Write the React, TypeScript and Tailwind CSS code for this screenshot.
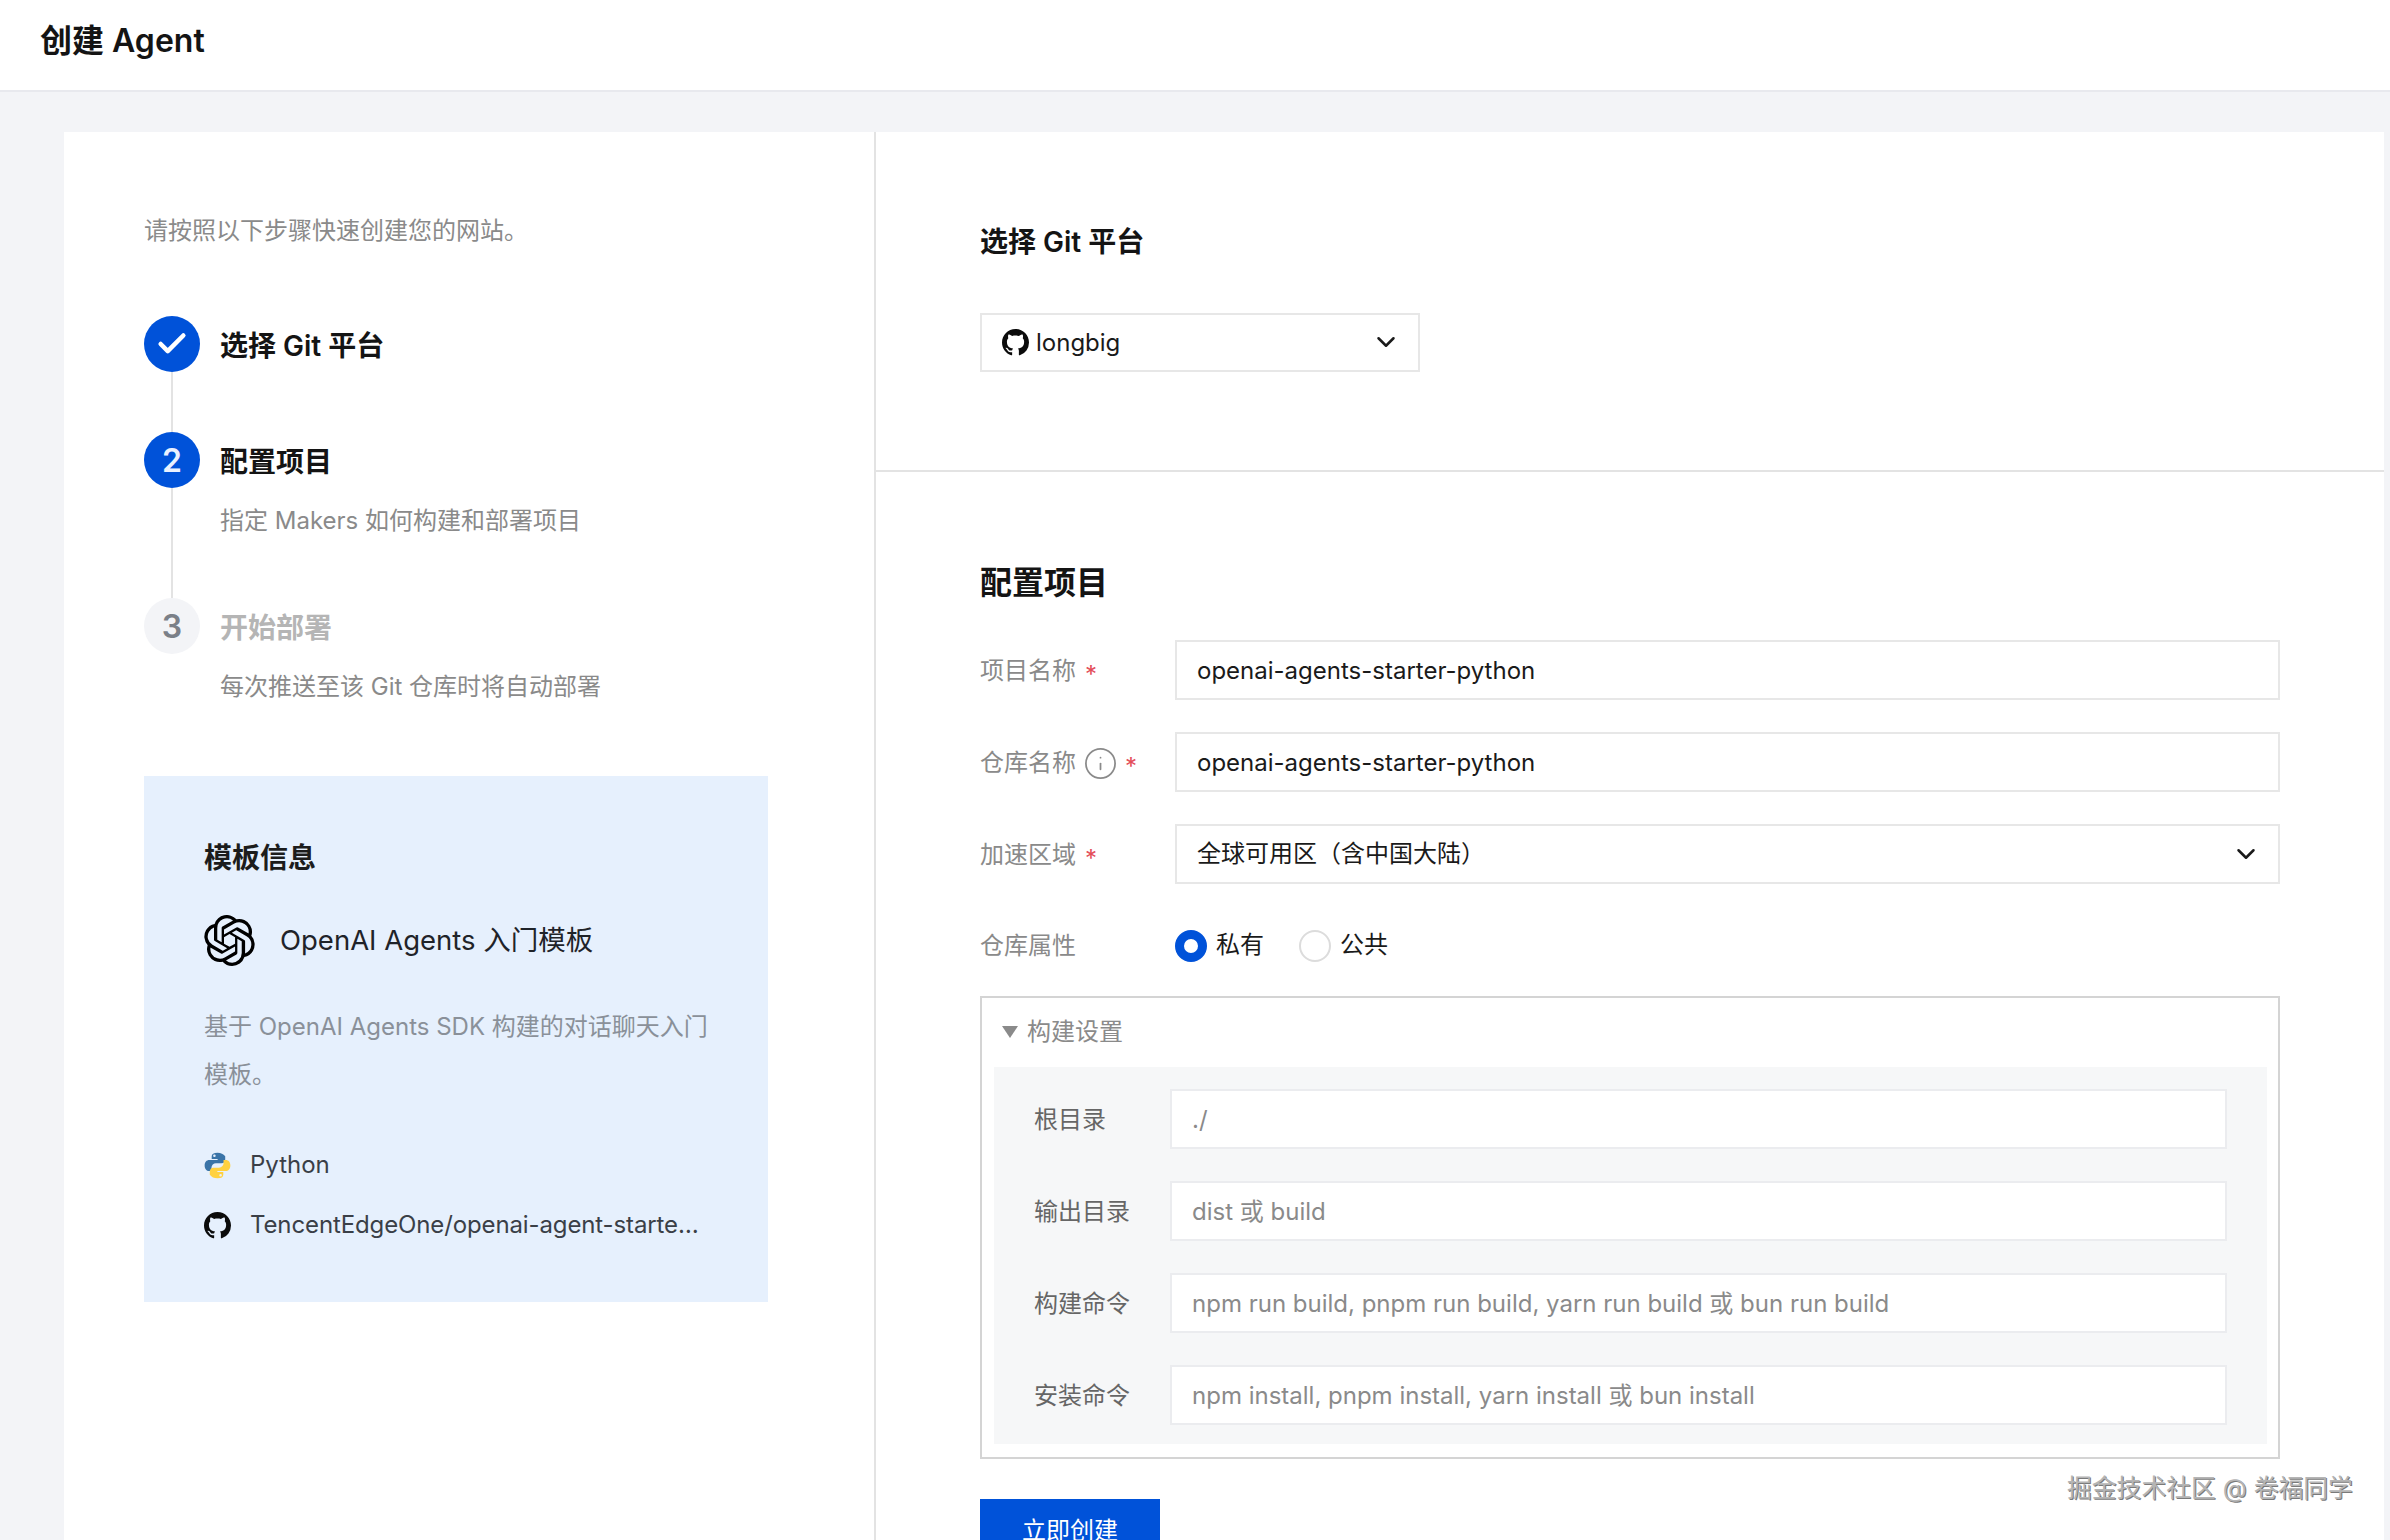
import { ChevronDown, Check, Info } from "lucide-react";
import { SiOpenai } from "react-icons/si";

const GH = ({ className }: { className: string }) => (
  <svg viewBox="0 0 16 16" className={className} fill="#0b0b0b">
    <path d="M8 0C3.58 0 0 3.58 0 8c0 3.54 2.29 6.53 5.47 7.59.4.07.55-.17.55-.38 0-.19-.01-.82-.01-1.49-2.01.37-2.53-.49-2.69-.94-.09-.23-.48-.94-.82-1.13-.28-.15-.68-.52-.01-.53.63-.01 1.08.58 1.23.82.72 1.21 1.87.87 2.33.66.07-.52.28-.87.51-1.07-1.78-.2-3.64-.89-3.64-3.95 0-.87.31-1.59.82-2.15-.08-.2-.36-1.02.08-2.12 0 0 .67-.21 2.2.82.64-.18 1.32-.27 2-.27.68 0 1.36.09 2 .27 1.53-1.04 2.2-.82 2.2-.82.44 1.1.16 1.92.08 2.12.51.56.82 1.27.82 2.15 0 3.07-1.87 3.75-3.65 3.95.29.25.54.73.54 1.48 0 1.07-.01 1.93-.01 2.2 0 .21.15.46.55.38A8.013 8.013 0 0016 8c0-4.42-3.58-8-8-8z" />
  </svg>
);

const PY = "M12 2C9 2 7.5 3 7.5 4.8V7h4.6v.7H5.6C3.5 7.7 2 9.4 2 12s1.5 4.3 3.5 4.3h1.8v-2.6c0-1.9 1.6-3.4 3.5-3.4h4.4c1.6 0 2.8-1.3 2.8-2.9V4.8C16.5 3 14.8 2 12 2zM9.6 3.4a1 1 0 110 2 1 1 0 010-2z";

const Python = () => (
  <svg viewBox="1.5 1.5 21 21" className="w-[27px] h-[27px] shrink-0" fillRule="evenodd">
    <path d={PY} fill="#3a74a8" fillRule="evenodd" />
    <path d={PY} fill="#ffd140" fillRule="evenodd" transform="rotate(180 12 12)" />
  </svg>
);

const Star = () => <span className="text-[#e34d59] text-[24px] leading-none relative top-[4px]">*</span>;

function Field({ label, value, extra }: { label: string; value: string; extra?: boolean }) {
  return (
    <div className="flex items-center h-[60px]">
      <div className="w-[195px] pt-[2px] flex items-center gap-[9px] text-[24px] text-[#8a8a8a]">
        <span>{label}</span>
        {extra && <Info className="w-[35px] h-[35px] -mx-[2px]" strokeWidth={1.2} />}
        <Star />
      </div>
      <input readOnly value={value} className="flex-1 h-full border-2 border-[#e7e7e7] px-[20px] text-[24px] text-[#1a1a1a] outline-none" />
    </div>
  );
}

function BuildRow({ label, placeholder, value }: { label: string; placeholder?: string; value?: string }) {
  return (
    <div className="flex items-center h-[60px]">
      <span className="w-[136px] pt-[2px] text-[24px] text-[#666666]">{label}</span>
      <input
        readOnly
        placeholder={placeholder}
        value={value}
        className="flex-1 h-full bg-white border-2 border-[#ebecef] px-[20px] text-[24px] text-[#8a8a8a] placeholder:text-[#8a8a8a] outline-none"
      />
    </div>
  );
}

export default function App() {
  return (
    <div className="relative w-[2390px] h-[1540px] overflow-hidden bg-[#f3f4f7] font-[Inter,'Noto_Sans_CJK_SC',sans-serif]">
      <header className="h-[92px] bg-white border-b-2 border-[#e8e9ee] pl-[40px] flex items-center">
        <h1 className="text-[32px] font-semibold text-[#141414] -mt-[9px]">创建 Agent</h1>
      </header>

      <main className="flex pt-[40px] pl-[64px] pr-[6px]">
        <aside className="w-[810px] h-[1408px] bg-white pt-[80px] pl-[80px]">
          <p className="pt-[1px] h-[36px] text-[24px] leading-[36px] text-[#8a8a8a]">请按照以下步骤快速创建您的网站。</p>

          <div className="mt-[68px]">
            <div className="flex gap-[20px] h-[116px]">
              <div className="w-[56px] flex flex-col items-center">
                <div className="w-[56px] h-[56px] rounded-full bg-[#0052d9] flex items-center justify-center">
                  <Check className="w-[34px] h-[34px] text-white" strokeWidth={3.2} />
                </div>
                <div className="w-[2px] flex-1 bg-[#e3e3e3]" />
              </div>
              <div className="h-[56px] pt-[3px] flex items-center text-[28px] font-semibold text-[#141414]">选择 Git 平台</div>
            </div>

            <div className="flex gap-[20px] h-[166px]">
              <div className="w-[56px] flex flex-col items-center">
                <div className="w-[56px] h-[56px] pt-[2px] rounded-full bg-[#0052d9] flex items-center justify-center text-[32px] font-semibold text-[#eaf1ff]">2</div>
                <div className="w-[2px] flex-1 bg-[#e3e3e3]" />
              </div>
              <div>
                <div className="h-[56px] pt-[3px] flex items-center text-[28px] font-semibold text-[#141414]">配置项目</div>
                <p className="mt-[15px] text-[24px] leading-[36px] text-[#8a8a8a]">指定 Makers 如何构建和部署项目</p>
              </div>
            </div>

            <div className="flex gap-[20px] h-[178px]">
              <div className="w-[56px] h-[56px] pt-[2px] rounded-full bg-[#f3f4f7] flex items-center justify-center text-[32px] font-semibold text-[#7b8088]">3</div>
              <div>
                <div className="h-[56px] pt-[3px] flex items-center text-[28px] font-semibold text-[#b5b5b5]">开始部署</div>
                <p className="mt-[15px] text-[24px] leading-[36px] text-[#8a8a8a]">每次推送至该 Git 仓库时将自动部署</p>
              </div>
            </div>
          </div>

          <section className="w-[624px] h-[526px] bg-[#e6f0fd] pt-[62px] pl-[60px]">
            <h2 className="text-[28px] leading-[40px] font-semibold text-[#1c1c1c]">模板信息</h2>
            <div className="mt-[37px] flex items-center gap-[25px] h-[50px]">
              <SiOpenai className="w-[51px] h-[51px] text-black shrink-0" />
              <span className="pt-[2px] text-[27.5px] text-[#1f2329]">OpenAI Agents 入门模板</span>
            </div>
            <p className="mt-[38px] w-[510px] text-[24px] leading-[48px] text-[#8a9099]">基于 OpenAI Agents SDK 构建的对话聊天入门模板。</p>
            <div className="mt-[48px] flex flex-col gap-[24px] text-[24px] leading-[36px] text-[#3a3f47]">
              <div className="flex items-center gap-[19px]">
                <Python />
                <span>Python</span>
              </div>
              <div className="flex items-center gap-[19px]">
                <GH className="w-[27px] h-[27px] shrink-0" />
                <span className="w-[452px] truncate tracking-[-0.12px]">TencentEdgeOne/openai-agent-starter-python</span>
              </div>
            </div>
          </section>
        </aside>

        <div className="flex-1 h-[1408px] bg-white border-l-2 border-[#e3e3e3]">
          <section className="h-[340px] border-b-2 border-[#e3e3e3] pt-[90px] pl-[104px]">
            <h2 className="text-[28px] leading-[40px] font-semibold text-[#141414]">选择 Git 平台</h2>
            <div className="mt-[51px] w-[440px] h-[59px] border-2 border-[#e7e7e7] pl-[20px] pr-[17px] flex items-center">
              <GH className="w-[27px] h-[27px]" />
              <span className="ml-[7px] text-[24px] text-[#1a1a1a]">longbig</span>
              <ChevronDown className="ml-auto w-[30px] h-[30px] text-[#1a1a1a] -mt-[2px]" strokeWidth={2} />
            </div>
          </section>

          <section className="pt-[89px] pl-[104px]">
            <div className="w-[1300px]">
              <h2 className="text-[32px] leading-[44px] font-semibold text-[#141414]">配置项目</h2>

              <div className="mt-[35px] flex flex-col gap-[32px]">
                <Field label="项目名称" value="openai-agents-starter-python" />
                <Field label="仓库名称" value="openai-agents-starter-python" extra />
                <div className="flex items-center h-[60px]">
                  <div className="w-[195px] pt-[2px] flex items-center gap-[9px] text-[24px] text-[#8a8a8a]">
                    <span>加速区域</span>
                    <Star />
                  </div>
                  <div className="flex-1 h-full border-2 border-[#e7e7e7] pl-[20px] pr-[17px] flex items-center text-[24px] text-[#1a1a1a]">
                    全球可用区（含中国大陆）
                    <ChevronDown className="ml-auto w-[30px] h-[30px] text-[#1a1a1a]" strokeWidth={2} />
                  </div>
                </div>
              </div>

              <div className="mt-[46px] flex items-center h-[32px]">
                <span className="w-[195px] text-[24px] text-[#8a8a8a]">仓库属性</span>
                <span className="w-[32px] h-[32px] rounded-full border-[9px] border-[#0052d9] bg-white" />
                <span className="ml-[9px] text-[24px] text-[#1a1a1a] -mt-[2px]">私有</span>
                <span className="ml-[35px] w-[32px] h-[32px] rounded-full border-2 border-[#dcdcdc] bg-white" />
                <span className="ml-[9px] text-[24px] text-[#1a1a1a] -mt-[2px]">公共</span>
              </div>

              <div className="mt-[34px] h-[463px] border-2 border-[#d4d4d4] flex flex-col">
                <div className="h-[69px] pb-[2px] pl-[20px] flex items-center gap-[9px] text-[24px] text-[#8a8a8a] shrink-0">
                  <svg viewBox="0 0 16 12" className="w-[16px] h-[12px]"><path d="M0 0h16L8 12z" fill="#8a8a8a" /></svg>
                  <span>构建设置</span>
                </div>
                <div className="ml-[12px] mr-[11px] mb-[13px] flex-1 bg-[#f6f7f8] pt-[22px] pl-[40px] pr-[40px] flex flex-col gap-[32px]">
                  <BuildRow label="根目录" value="./" />
                  <BuildRow label="输出目录" placeholder="dist 或 build" />
                  <BuildRow label="构建命令" placeholder="npm run build, pnpm run build, yarn run build 或 bun run build" />
                  <BuildRow label="安装命令" placeholder="npm install, pnpm install, yarn install 或 bun install" />
                </div>
              </div>

              <button className="mt-[40px] w-[180px] h-[64px] bg-[#0052d9] text-white text-[24px]">立即创建</button>
            </div>
          </section>
        </div>
      </main>

      <div className="absolute left-[2067px] top-[1472px] text-[24.8px] leading-[32px] text-[#b5b5b5] [text-shadow:1px_1px_0_#7a7a7a]">掘金技术社区 @ 卷福同学</div>
    </div>
  );
}
